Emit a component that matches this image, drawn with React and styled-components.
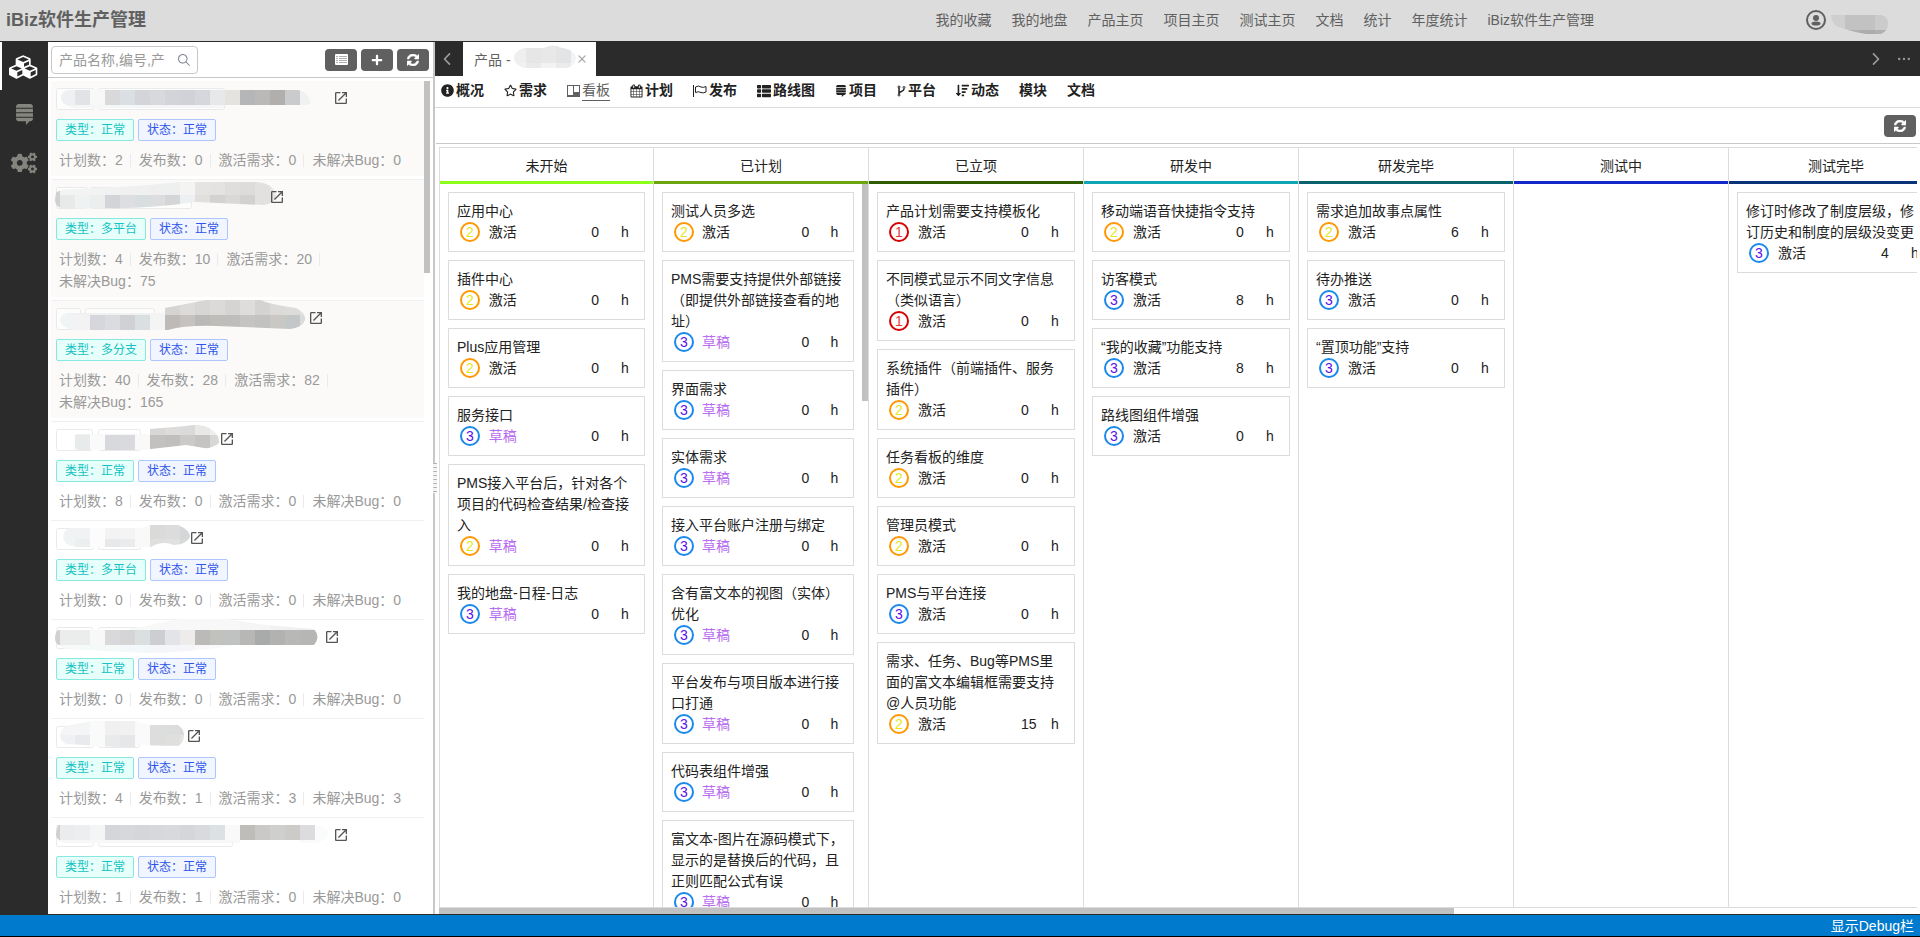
import React, { useId } from 'react'
import styled, { createGlobalStyle } from 'styled-components'
import { FaCogs, FaInfoCircle, FaPlus, FaRegStar, FaSortAmountDown, FaStackExchange, FaThList } from 'react-icons/fa'
import { IoIosArrowBack, IoIosArrowForward, IoIosClose, IoIosMore, IoIosSearch, IoMdOpen } from 'react-icons/io'

const GlobalStyle = createGlobalStyle`
    * {
        box-sizing: border-box;
    }

    body {
        margin: 0;
        overflow: hidden;
        color: #222;
        background: #fff;
        font-family: "Liberation Sans", "Noto Sans CJK SC", sans-serif;
        font-size: 14px;
    }

    button, input {
        font: inherit;
        color: inherit;
    }

    button {
        padding: 0;
        border: 0;
        background: none;
        cursor: pointer;
    }

    svg {
        display: block;
        flex-shrink: 0;
    }
`

const Page = styled.div`
    display: flex;
    flex-direction: column;
    height: 100vh;
`;

const Header = styled.header`
    display: flex;
    align-items: center;
    flex-shrink: 0;
    height: 41px;
    padding: 0 32px 1px 6px;
    color: #606060;
    background: #dcdcdc;
`;

const Title = styled.h1`
    margin: 0;
    font-size: 18px;
    line-height: 40px;
`;

const Menu = styled.nav`
    display: flex;
    gap: 20px;
    margin-left: auto;
    margin-right: 212px;
    line-height: 38px;
`;

const MenuLink = styled.a`
    color: inherit;
    text-decoration: none;
    white-space: nowrap;
`;

const User = styled.button`
    display: flex;
    align-items: center;
    gap: 5px;
`;

const Body = styled.div`
    display: flex;
    flex: 1;
    min-height: 0;
    border-top: 1px solid #2b2b2b;
    border-bottom: 1px solid #2b2b2b;
`;

const SideBar = styled.nav`
    flex-shrink: 0;
    width: 48px;
    background: #2b2b2b;
`;

const SideButton = styled.button`
    display: flex;
    align-items: center;
    justify-content: center;
    width: 48px;
    height: 48px;
    padding: 1px 2px 0 0;
    color: ${p => p.$active ? '#fff' : '#85857f'};
    border-left: 2px solid ${p => p.$active ? '#fff' : 'transparent'};
`;

const ProductPanel = styled.aside`
    display: flex;
    flex-direction: column;
    flex-shrink: 0;
    width: 385px;
`;

const SearchBar = styled.div`
    display: flex;
    align-items: center;
    flex-shrink: 0;
    gap: 4px;
    height: 36px;
    padding: 0 4px 0 3px;
    border-bottom: 1px solid #c8c8c8;
`;

const SearchBox = styled.label`
    display: flex;
    align-items: center;
    width: 147px;
    height: 28px;
    margin-right: auto;
    padding: 0 5px 0 7px;
    color: #808695;
    border: 1px solid #c8c8c8;
    border-radius: 4px;
`;

const SearchInput = styled.input`
    flex: 1;
    min-width: 0;
    padding: 0;
    border: 0;
    outline: 0;
    background: none;

    &::placeholder {
        color: #999;
    }
`;

const ToolButton = styled.button`
    display: flex;
    align-items: center;
    justify-content: center;
    width: 32px;
    height: 22px;
    color: #fff;
    background: #606060;
    border-radius: 4px;
`;

const ProductScroll = styled.div`
    display: flex;
    flex: 1;
    min-height: 0;
    padding: 3px 3px 0;
    overflow: hidden;
`;

const ProductList = styled.ul`
    flex: 1;
    margin: 0;
    padding: 0;
    list-style: none;
`;

const ScrollThumb = styled.div`
    flex-shrink: 0;
    width: ${p => p.$width || '6px'};
    height: ${p => p.$height || '6px'};
    background: #c1c1c1;
`;

const ProductItem = styled.li`
    padding-bottom: 3px;
    border-bottom: 1px solid #f0f0f0;
`;

const ProductBody = styled.div`
    padding: 7px 0 5px 5px;
    background: ${p => p.$top ? '#fbfaf8' : '#fff'};
`;

const NameRow = styled.div`
    display: flex;
    height: 22px;
    margin-bottom: 9px;
    color: #555;
`;

const OpenIcon = styled(IoMdOpen)`
    width: 16px;
    height: 16px;
    margin-top: 2px;
`;

const TagRow = styled.div`
    display: flex;
    gap: 4px;
    margin-bottom: 8px;
`;

const Tag = styled.span`
    height: 22px;
    padding: 0 8px;
    font-size: 12px;
    line-height: 20px;
    color: ${p => p.$kind === 'type' ? '#13c2c2' : '#2f54eb'};
    background: ${p => p.$kind === 'type' ? '#e6fffb' : '#f0f5ff'};
    border: 1px solid ${p => p.$kind === 'type' ? '#87e8de' : '#adc6ff'};
    border-radius: 2px;
`;

const Stats = styled.div`
    display: flex;
    flex-wrap: wrap;
    align-items: center;
    padding-left: 3px;
    color: #999;
    line-height: 22px;
`;

const Stat = styled.span`
    display: flex;
    align-items: center;
    white-space: nowrap;

    &:not(:last-child)::after {
        content: '';
        width: 1px;
        height: 13px;
        margin: 0 8px 0 7px;
        background: #e8eaec;
    }
`;

const Splitter = styled.div`
    display: flex;
    align-items: center;
    flex-shrink: 0;
    width: 2px;
    background: #c8c8c8;
`;

const SplitHandle = styled.div`
    position: relative;
    flex-shrink: 0;
    width: 4px;
    height: 30px;
    background: repeating-linear-gradient(#b4b4b4 0 1px, #f4f4f4 1px 4px);
`;

const Main = styled.main`
    display: flex;
    flex-direction: column;
    flex: 1;
    min-width: 0;
`;

const TabBar = styled.div`
    display: flex;
    align-items: center;
    flex-shrink: 0;
    height: 34px;
    color: #999;
    background: #2b2b2b;
`;

const TabArrow = styled.button`
    display: flex;
    align-items: center;
    justify-content: center;
    width: 28px;
    height: 34px;
    padding-right: 4px;
`;

const Tab = styled.div`
    display: flex;
    align-items: center;
    gap: 3px;
    width: 133px;
    height: 34px;
    margin-right: auto;
    padding-left: 11px;
    color: #606060;
    background: #fff;
`;

const Toolbar = styled.nav`
    display: flex;
    align-items: center;
    flex-shrink: 0;
    gap: 20px;
    height: 32px;
    padding: 0 6px 2px;
    border-bottom: 1px solid #dcdcdc;
`;

const ToolbarItem = styled.button`
    display: flex;
    align-items: center;
    gap: 2px;
    font-weight: bold;
    line-height: 20px;
    white-space: nowrap;
    color: ${p => p.$active ? '#606060' : '#222'};

    span {
        font-weight: ${p => p.$active ? 'normal' : 'bold'};
        border-bottom: 1px solid ${p => p.$active ? '#606060' : 'transparent'};
    }
`;

const ActionBar = styled.div`
    display: flex;
    align-items: center;
    justify-content: flex-end;
    flex-shrink: 0;
    height: 36px;
    margin-left: 1px;
    padding: 0 4px 0 0;
    border-bottom: 1px solid #c8c8c8;
`;

const Board = styled.section`
    display: flex;
    flex: 1;
    min-height: 0;
    margin: 3px 3px 0 4px;
    overflow: hidden;
    border: solid #dcdcdc;
    border-width: 1px 0 1px 1px;
`;

const Column = styled.div`
    display: flex;
    flex-direction: column;
    flex-shrink: 0;
    width: 215px;
    border-right: 1px solid #dcdcdc;

    &:first-child {
        width: 214px;
    }
`;

const ColumnTitle = styled.h2`
    flex-shrink: 0;
    height: 36px;
    margin: 0;
    font-size: 14px;
    font-weight: normal;
    line-height: 36px;
    text-align: center;
    border-bottom: 3px solid ${p => p.$color};
`;

const ColumnBody = styled.div`
    display: flex;
    flex: 1;
    min-height: 0;
    overflow: hidden;
`;

const CardList = styled.div`
    display: flex;
    flex: 1;
    flex-direction: column;
    gap: 8px;
    min-width: 0;
    padding: 8px;
`;

const Card = styled.article`
    flex-shrink: 0;
    padding: 8px;
    line-height: 21px;
    border: 1px solid #dcdcdc;
`;

const CardTitle = styled.div`
    overflow-wrap: anywhere;
`;

const CardMeta = styled.div`
    display: grid;
    grid-template-columns: minmax(0, 4fr) minmax(0, 14fr) minmax(0, 4fr) minmax(0, 2fr);
    align-items: start;
    height: 21px;
`;

const levels = {
    1: { ring: '#d50000', text: '#e53935' },
    2: { ring: '#ff9800', text: '#e6e619' },
    3: { ring: '#1a88ec', text: '#5a10ee' },
}

const Level = styled.span`
    width: 20px;
    height: 20px;
    margin-left: 3px;
    line-height: 17px;
    text-align: center;
    color: ${p => levels[p.$level].text};
    border: 2px solid ${p => levels[p.$level].ring};
    border-radius: 50%;
`;

const State = styled.span`
    padding-left: 2px;
    color: ${p => p.$draft ? '#b96df0' : '#222'};
`;

const BoardScroll = styled.div`
    flex-shrink: 0;
    height: 6px;
    margin: 0 3px 0 4px;
`;

const Footer = styled.footer`
    display: flex;
    align-items: center;
    justify-content: flex-end;
    flex-shrink: 0;
    height: 22px;
    padding: 0 6px 2px 0;
    color: #fff;
    background: #007acc;
    border-bottom: 1px solid #000;
`;

const CubesIcon = () => (
    <svg width="30" height="24" viewBox="0 0 2304 1792" fill="currentColor">
        <path d="M640 1632l384-192v-314l-384 164v342zm-64-454l404-173-404-173-404 173zm1088 454l384-192v-314l-384 164v342zm-64-454l404-173-404-173-404 173zm-448-293l384-165v-266l-384 164v267zm-64-379l441-189-441-189-441 189zm1088 518v416q0 36-19 67t-52 47l-448 224q-25 14-57 14t-57-14l-448-224q-4-2-7-4-2 2-7 4l-448 224q-25 14-57 14t-57-14l-448-224q-33-16-52-47t-19-67v-416q0-38 21.5-70t56.5-48l434-186v-400q0-38 21.5-70t56.5-48l448-192q23-10 50-10t50 10l448 192q35 16 56.5 48t21.5 70v400l434 186q36 16 57 48t21 70z" />
    </svg>
)

const UserIcon = () => (
    <svg width="20" height="20" viewBox="0 0 20 20" fill="currentColor">
        <circle cx="10" cy="10" r="9" fill="none" stroke="currentColor" strokeWidth="2" />
        <circle cx="10" cy="8" r="3" />
        <ellipse cx="10" cy="13.500" rx="4.500" ry="2" />
    </svg>
)

const RefreshIcon = () => (
    <svg width="12" height="12" viewBox="0 0 1536 1536" fill="currentColor" stroke="currentColor" strokeWidth="70">
        <path d="M1511 928q0 5-1 7-64 268-268 434.5t-478 166.5q-146 0-282.5-55t-243.5-157l-129 129q-19 19-45 19t-45-19-19-45v-448q0-26 19-45t45-19h448q26 0 45 19t19 45-19 45l-137 137q71 66 161 102t187 36q134 0 250-65t186-179q11-17 53-117 8-23 30-23h192q13 0 22.5 9.5t9.5 22.5zm25-800v448q0 26-19 45t-45 19h-448q-26 0-45-19t-19-45 19-45l138-138q-148-137-349-137-134 0-250 65t-186 179q-11 17-53 117-8 23-30 23h-199q-13 0-22.5-9.5t-9.5-22.5v-7q65-268 270-434.5t480-166.5q146 0 284 55.5t245 156.5l130-129q19-19 45-19t45 19 19 45z" />
    </svg>
)

const ListIcon = () => (
    <svg width="13" height="11" viewBox="0 0 13 11">
        <rect width="13" height="11" rx="1" fill="#fff" />
        <path d="M1 2.500h2M4 2.500h8M1 4.500h2M4 4.500h8M1 6.500h2M4 6.500h8M1 8.500h2M4 8.500h8" stroke="#606060" strokeOpacity=".5" />
    </svg>
)

const TrelloIcon = () => (
    <svg width="13" height="12" viewBox="0 0 13 12" fill="currentColor">
        <path fillRule="evenodd" d="M0 0h13v12H0zM1 1v9h5V1zM7 1v6h5V1z" />
    </svg>
)

const CalendarIcon = () => (
    <svg width="13" height="14" viewBox="0 0 1792 1792" fill="currentColor">
        <path d="M192 1664h288v-288h-288v288zm352 0h320v-288h-320v288zm-352-352h288v-320h-288v320zm352 0h320v-320h-320v320zm-352-384h288v-288h-288v288zm736 736h320v-288h-320v288zm-384-736h320v-288h-320v288zm768 736h288v-288h-288v288zm-384-352h320v-320h-320v320zm-352-864v-288q0-13-9.5-22.5t-22.5-9.5h-64q-13 0-22.5 9.5t-9.5 22.5v288q0 13 9.5 22.5t22.5 9.5h64q13 0 22.5-9.5t9.5-22.5zm736 864h288v-320h-288v320zm-384-384h320v-288h-320v288zm384 0h288v-288h-288v288zm32-480v-288q0-13-9.5-22.5t-22.5-9.5h-64q-13 0-22.5 9.5t-9.5 22.5v288q0 13 9.5 22.5t22.5 9.5h64q13 0 22.5-9.5t9.5-22.5zm384-64v1280q0 52-38 90t-90 38h-1408q-52 0-90-38t-38-90v-1280q0-52 38-90t90-38h128v-96q0-66 47-113t113-47h64q66 0 113 47t47 113v96h384v-96q0-66 47-113t113-47h64q66 0 113 47t47 113v96h128q52 0 90 38t38 90z" />
    </svg>
)

const FlagIcon = () => (
    <svg width="14" height="13" viewBox="0 0 14 13" fill="none" stroke="currentColor">
        <path d="M.5 1v12" />
        <path d="M2.500 3q3-2 5.500 0 2 1 5-.5V8q-3 1.500-5 .5Q5.500 7 2.500 8.500z" />
    </svg>
)

const ForkIcon = () => (
    <svg width="9" height="12" viewBox="0 0 9 12" fill="none" stroke="currentColor">
        <circle cx="2" cy="2" r="1" />
        <circle cx="7" cy="2.500" r="1" />
        <circle cx="2" cy="10" r="1" />
        <path strokeWidth="1.500" d="M2 3v6M7 4c0 3-5 2-5 4.500" />
    </svg>
)

// smeared-out names: 15px blocks clipped to a brush stroke
const Smudge = ({ width, height = 22, tags = [], stroke, rows }) => {
    const id = useId()
    return (
        <svg width={width} height={height} overflow="visible" aria-hidden="true">
            <clipPath id={id}><path d={stroke} /></clipPath>
            {tags.map(([x, w]) => (
                <rect key={x} x={x + .5} y=".5" width={w - 1} height={height - 1} rx="2" fill="#fff" fillOpacity=".6" stroke="#e8eaec" />
            ))}
            <g clipPath={`url(#${id})`}>
                {rows.map(([x, y, h, colors]) => colors.split(' ').map((c, i) => (
                    <rect key={`${x}-${y}-${i}`} x={x + i * 15} y={y} width="15" height={h} fill={`#${c}`} />
                )))}
            </g>
        </svg>
    )
}

const products = [
    {
        top: true, type: '正常', counts: [2, 0, 0, 0],
        smudge: {
            width: 277, tags: [[0, 38], [42, 127]],
            stroke: 'M12 2H242Q254 4 254 16L250 17H168V20H20Q5 18 5 9Q6 3 12 2z',
            rows: [[4, 2, 15, 'eff0f1 e2e3e7 f8f8f8 d9d9db d9dfe2 d4d5d9 d8d9dc d3d4da d1d2d8 d5d7dc e6e8ea e5e3df b5b6b8 bab9b7 b0afae c9cbcd f0f1f1'], [4, 17, 4, 'f3f5f5 f5f7f7 f5f7f7 f3f7f7 f3f7f7 f5f5f8 f5f5f8 f5f5f8 f5f5f8 f3f5f7 f5f5f5']],
        },
    },
    {
        top: true, type: '多平台', counts: [4, 10, 20, 75],
        smudge: {
            width: 213, tags: [[0, 32], [34, 102]],
            stroke: 'M0 6Q3 2 20 2L80 -1L125 -5H200Q218 -4 220 9Q218 17 208 18L140 15Q90 22 50 21L8 22Q-1 20 -1 13z',
            rows: [[-11, -7, 15, 'd0d0d0 f2f3f3 f3f3f3 f1f2f2 f1f1f1 f0f0f0 f0f0f0 efefef eeefef f4f4f3 e5e4e3 e4e3e1 dfdedc dddcda e2e1df e6e5e4'], [-11, 8, 15, 'd0d0d0 e8e9e9 eff2f3 eceeed d3d4d8 dddee0 d8dde0 dcdddf d5d5d7 edf0f2 e0dfdd d3d2d0 d9d8d7 d2d1cf e2e1df e3e2e1']],
        },
    },
    {
        top: true, type: '多分支', counts: [40, 28, 82, 165],
        smudge: {
            width: 252, tags: [[0, 25], [29, 70]],
            stroke: 'M12 5H109V0Q130 -4 150 -8H205Q212 -4 240 0Q250 5 249 12Q246 20 234 21L160 18Q130 17 112 22H16Q4 18 4 12Q5 6 12 5z',
            rows: [[4, -8, 15, 'f0f1f2 f1f1f1 f1f1f1 f1f1f1 f1f1f1 f1f1f1 f4f4f4 d6d4d2 dddbd9 d8d6d5 dcdad8 d5d4d3 dedddc d4d3d1 dbdad8 dcdcdb e0e0df'], [4, 7, 15, 'f0f4f4 f3f3f3 d5d7dc dadcdf d0d1d4 dadfe1 f4f4f4 bdbab8 c5c2c0 bbb9b7 bebdba bebdbb c5c4c2 c2c2c0 c9c8c4 c3c7c7 dbdbdb']],
        },
    },
    {
        type: '正常', counts: [8, 0, 0, 0],
        smudge: {
            width: 163, tags: [[0, 37], [42, 43]],
            stroke: 'M20 5H94V0L130 -3Q145 -6 155 0Q164 6 163 14Q156 20 148 19L130 16L95 20L88 21H22Q15 18 14 14z',
            rows: [[4, -9, 15, 'ffffff f1f1f1 f9f9f9 f5f5f5 f5f5f5 f8f8f8 d8d7d5 dddcda dadada e8e8e7 efefef'], [4, 6, 15, 'ffffff e8ebec fafafa d8d9dc d9dadd f9f9f9 c3c1bf c0bfbd cbcac9 c5c4c3 d8d8d7']],
        },
    },
    {
        type: '多平台', counts: [0, 0, 0, 0],
        smudge: {
            width: 133, tags: [[0, 38], [42, 43]],
            stroke: 'M14 0H85L94 -3H122Q134 2 134 9Q131 16 118 17Q106 12 95 19H20Q8 18 7 9Q8 1 14 0z',
            rows: [[4, -4, 15, 'f1f2f3 f1f2f3 fcfcfc f3f3f3 f4f4f4 f9f9f9 dadad9 dddcdc d5d6d8 eeeeee'], [4, 11, 12, 'f1f4f4 eceff0 fcfcfc e6e8e9 eaebec f9f9f9 dfdfde e0e0e0 d8d9da efefef']],
        },
    },
    {
        type: '正常', counts: [0, 0, 0, 0],
        smudge: {
            width: 268, tags: [[0, 37], [42, 48]],
            stroke: 'M2 3H70Q110 -6 124 -8H170L210 -2L258 2Q265 10 258 18H180Q140 25 90 26L10 22Q-1 18 -1 12Q-1 6 2 3z',
            rows: [[-11, -9, 12, 'f8f8f8 f8f8f8 f8f8f8 f8f8f8 f8f8f8 f8f8f8 f8f8f8 f8f8f8 f8f8f8 f8f8f8 f8f8f8 f8f8f8 f8f8f8 f5f5f5 f5f5f5 f2f2f2 f0f0f0 eeeeee'], [-11, 3, 15, 'd0d0d0 ebeded ebeded f8f8f8 d9d9db d5d5d5 dadfdf ccced2 e3e4e8 edecea bbbab8 c1c2be bfc2c0 b7b7b5 a9abaa b2b2b1 b8b8b7 b6b6b5 b6b6b5'], [-11, 18, 8, 'f8f8f8 f8f8f8 f3faf8 f3faf8 f3faf8 f3f8fa f3f8fa f5f6fa f5f6fa f5f6fa f8f8f8 f9f9f9 fafafa']],
        },
    },
    {
        type: '正常', counts: [4, 1, 3, 3],
        smudge: {
            width: 130, tags: [[0, 38], [42, 42]],
            stroke: 'M10 0L35 -5H80L94 -1H122Q128 3 128 9Q128 17 122 20L80 19V21H60L10 18Q4 15 4 9Q5 3 10 0z',
            rows: [[4, -6, 15, 'f5f5f5 f4f5f6 fafafa f0f0f0 f1f1f1 fafafa dddddd dbdcdc d8d9d9'], [4, 9, 13, 'f0f1f2 e9eaed fafafa e9eaec e6e7e9 fafafa dddddd dfdfde e4e4e3']],
        },
    },
    {
        type: '正常', counts: [1, 1, 0, 0],
        smudge: {
            width: 277, tags: [[0, 38], [42, 135]],
            stroke: 'M2 0H260Q272 2 273 9Q271 15 260 18H42L8 18Q0 15 0 9z',
            rows: [[-11, 0, 15, 'd0d0d0 ebeced edeeef f5f5f5 d5d6da d7d8dc d5d6da d7d8db d8d9dc d5d6da d8dadd dce1e4 f9f9f9 bfbdba cac9c8 cfcfce cccbc8 dcdcde fafcfb'], [-11, 15, 5, 'd5d5d5 f7f7f7 f7f7f7 f8f8f8 f8f8f8 f8f8f8 f8f8f8 f8f8f8 f8f8f8 f8f8f8 f8f8f8 f8f8f8 f8f8f8 ffffff ffffff ffffff ffffff fafafa fafafa']],
        },
    },
]

const countNames = ['计划数', '发布数', '激活需求', '未解决Bug']

const menu = ['我的收藏', '我的地盘', '产品主页', '项目主页', '测试主页', '文档', '统计', '年度统计', 'iBiz软件生产管理']

const toolbar = [
    { text: '概况', icon: <FaInfoCircle size={13} /> },
    { text: '需求', icon: <FaRegStar size={13} /> },
    { text: '看板', icon: <TrelloIcon />, active: true },
    { text: '计划', icon: <CalendarIcon /> },
    { text: '发布', icon: <FlagIcon /> },
    { text: '路线图', icon: <FaThList size={14} /> },
    { text: '项目', icon: <FaStackExchange size={12} /> },
    { text: '平台', icon: <ForkIcon /> },
    { text: '动态', icon: <FaSortAmountDown size={13} /> },
    { text: '模块' },
    { text: '文档' },
]

// card: [title, level, hours, draft]
const columns = [
    {
        title: '未开始', color: '#8cff1a',
        cards: [
            ['应用中心', 2, 0],
            ['插件中心', 2, 0],
            ['Plus应用管理', 2, 0],
            ['服务接口', 3, 0, true],
            ['PMS接入平台后，针对各个项目的代码检查结果/检查接入', 2, 0, true],
            ['我的地盘-日程-日志', 3, 0, true],
        ],
    },
    {
        title: '已计划', color: '#6da510', thumb: '217px',
        cards: [
            ['测试人员多选', 2, 0],
            ['PMS需要支持提供外部链接（即提供外部链接查看的地址）', 3, 0, true],
            ['界面需求', 3, 0, true],
            ['实体需求', 3, 0, true],
            ['接入平台账户注册与绑定', 3, 0, true],
            ['含有富文本的视图（实体）优化', 3, 0, true],
            ['平台发布与项目版本进行接口打通', 3, 0, true],
            ['代码表组件增强', 3, 0, true],
            ['富文本-图片在源码模式下，显示的是替换后的代码，且正则匹配公式有误', 3, 0, true],
        ],
    },
    {
        title: '已立项', color: '#2f5c00',
        cards: [
            ['产品计划需要支持模板化', 1, 0],
            ['不同模式显示不同文字信息（类似语言）', 1, 0],
            ['系统插件（前端插件、服务插件）', 2, 0],
            ['任务看板的维度', 2, 0],
            ['管理员模式', 2, 0],
            ['PMS与平台连接', 3, 0],
            ['需求、任务、Bug等PMS里面的富文本编辑框需要支持@人员功能', 2, 15],
        ],
    },
    {
        title: '研发中', color: '#0fa5b4',
        cards: [
            ['移动端语音快捷指令支持', 2, 0],
            ['访客模式', 3, 8],
            ['“我的收藏”功能支持', 3, 8],
            ['路线图组件增强', 3, 0],
        ],
    },
    {
        title: '研发完毕', color: '#0a636c',
        cards: [
            ['需求追加故事点属性', 2, 6],
            ['待办推送', 3, 0],
            ['“置顶功能”支持', 3, 0],
        ],
    },
    { title: '测试中', color: '#1428c8', cards: [] },
    {
        title: '测试完毕', color: '#0a3278',
        cards: [['修订时修改了制度层级，修订历史和制度的层级没变更', 3, 4]],
    },
]

const Product = ({ product }) => (
    <ProductItem>
        <ProductBody $top={product.top}>
            <NameRow>
                <Smudge {...product.smudge} />
                <OpenIcon/>
            </NameRow>
            <TagRow>
                <Tag $kind="type">类型：{product.type}</Tag>
                <Tag>状态：正常</Tag>
            </TagRow>
            <Stats>
                {countNames.map((name, i) => (
                    <Stat key={name}>{name}：{product.counts[i]}</Stat>
                ))}
            </Stats>
        </ProductBody>
    </ProductItem>
)

const BoardColumn = ({ column }) => (
    <Column>
        <ColumnTitle $color={column.color}>{column.title}</ColumnTitle>
        <ColumnBody>
            <CardList>
                {column.cards.map(([title, level, hours, draft]) => (
                    <Card key={title}>
                        <CardTitle>{title}</CardTitle>
                        <CardMeta>
                            <Level $level={level}>{level}</Level>
                            <State $draft={draft}>{draft ? '草稿' : '激活'}</State>
                            <span>{hours}</span>
                            <span>h</span>
                        </CardMeta>
                    </Card>
                ))}
            </CardList>
            {column.thumb && <ScrollThumb $height={column.thumb} />}
        </ColumnBody>
    </Column>
)

const App = () => {
    return(
        <Page>
            <GlobalStyle/>
            <Header>
                <Title>iBiz软件生产管理</Title>
                <Menu>
                    {menu.map(text => <MenuLink key={text} href="#">{text}</MenuLink>)}
                </Menu>
                <User aria-label="用户">
                    <UserIcon/>
                    <Smudge
                        width={57}
                        height={20}
                        stroke="M0 5H50Q57 7 57 13Q57 21 50 24H35Q18 21 5 16Q0 11 0 5z"
                        rows={[[-1, 5, 15, 'cfcfcf c2c2c2 c2c2c2 cbcbcb'], [-1, 20, 5, 'b0b0b0 b0b0b0 acacac b0b0b0']]}
                    />
                </User>
            </Header>
            <Body>
                <SideBar>
                    <SideButton $active aria-label="产品"><CubesIcon/></SideButton>
                    <SideButton aria-label="列表"><FaStackExchange size={21} /></SideButton>
                    <SideButton aria-label="设置"><FaCogs size={26} /></SideButton>
                </SideBar>
                <ProductPanel>
                    <SearchBar>
                        <SearchBox>
                            <SearchInput aria-label="搜索" placeholder="产品名称,编号,产" />
                            <IoIosSearch size={16} />
                        </SearchBox>
                        <ToolButton aria-label="列表"><ListIcon/></ToolButton>
                        <ToolButton aria-label="新建"><FaPlus size={12} /></ToolButton>
                        <ToolButton aria-label="刷新"><RefreshIcon/></ToolButton>
                    </SearchBar>
                    <ProductScroll>
                        <ProductList>
                            {products.map((product, i) => <Product key={i} product={product} />)}
                        </ProductList>
                        <ScrollThumb $height="192px" />
                    </ProductScroll>
                </ProductPanel>
                <Splitter><SplitHandle/></Splitter>
                <Main>
                    <TabBar>
                        <TabArrow aria-label="向左"><IoIosArrowBack size={18} /></TabArrow>
                        <Tab>
                            产品 -
                            <Smudge
                                width={55}
                                height={22}
                                stroke="M10 0H30Q38 -5 48 0Q62 2 62 11Q60 19 52 20H10Q0 17 0 10Q0 3 10 0z"
                                rows={[[-3, -4, 19, 'efefef e6e6e6 e8e8e8 e3e4e6 f3f3f3'], [-3, 15, 6, 'f1f1f1 eaeaea f3f3f3 ebebec f5f5f5']]}
                            />
                            <IoIosClose size={20} color="#aaa" />
                        </Tab>
                        <TabArrow aria-label="向右"><IoIosArrowForward size={18} /></TabArrow>
                        <TabArrow aria-label="更多"><IoIosMore size={16} /></TabArrow>
                    </TabBar>
                    <Toolbar>
                        {toolbar.map(item => (
                            <ToolbarItem key={item.text} $active={item.active}>
                                {item.icon}
                                <span>{item.text}</span>
                            </ToolbarItem>
                        ))}
                    </Toolbar>
                    <ActionBar>
                        <ToolButton aria-label="刷新"><RefreshIcon/></ToolButton>
                    </ActionBar>
                    <Board>
                        {columns.map(column => <BoardColumn key={column.title} column={column} />)}
                    </Board>
                    <BoardScroll>
                        <ScrollThumb $width="68.7%" />
                    </BoardScroll>
                </Main>
            </Body>
            <Footer>
                <button>显示Debug栏</button>
            </Footer>
        </Page>
    )
}

export default App
